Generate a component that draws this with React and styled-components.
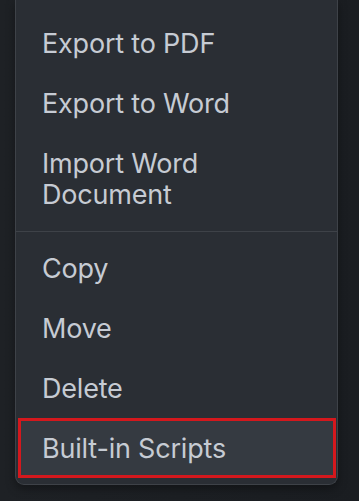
import styled, { createGlobalStyle } from 'styled-components';

const Global = createGlobalStyle`
  html, body {
    margin: 0;
    padding: 0;
    background: #1c1f23;
  }
  body {
    font-family: Inter, "Liberation Sans", sans-serif;
    -webkit-font-smoothing: antialiased;
  }
`;

const Page = styled.div`
  width: 359px;
  height: 501px;
  overflow: hidden;
  background: linear-gradient(90deg, #1e2125 0%, #1c1f23 50%, #1a1d21 100%);
`;

const Panel = styled.div`
  margin-left: 15px;
  width: 323px;
  box-sizing: border-box;
  background: #2a2e34;
  border: 1px solid #3e4248;
  border-top: none;
  border-radius: 0 0 9px 9px;
  padding: 13px 0 6px;
  box-shadow: 0 4px 10px rgba(0, 0, 0, 0.35);
`;

const Group = styled.div`
  display: flex;
  flex-direction: column;
`;

const Divider = styled.div`
  height: 1px;
  background: #3e4248;
  margin: 7px 0 6px;
`;

const Item = styled.div`
  padding: 14.5px 20px 14.5px 26px;
  font-size: 27px;
  line-height: 31px;
  color: #c6cbd3;
  letter-spacing: -0.2px;
  ${(p) =>
    p.$marked &&
    `
    margin: 0 1px 0 2px;
    padding: 11.5px 17px 11.5px 21px;
    background: #353a41;
    border: 3px solid #d4181d;
  `}
`;

export default function App() {
  return (
    <Page>
      <Global />
      <Panel>
        <Group>
          <Item>Export to PDF</Item>
          <Item>Export to Word</Item>
          <Item>
            Import Word
            <br />
            Document
          </Item>
        </Group>
        <Divider />
        <Group>
          <Item>Copy</Item>
          <Item>Move</Item>
          <Item>Delete</Item>
          <Item $marked>Built-in Scripts</Item>
        </Group>
      </Panel>
    </Page>
  );
}
